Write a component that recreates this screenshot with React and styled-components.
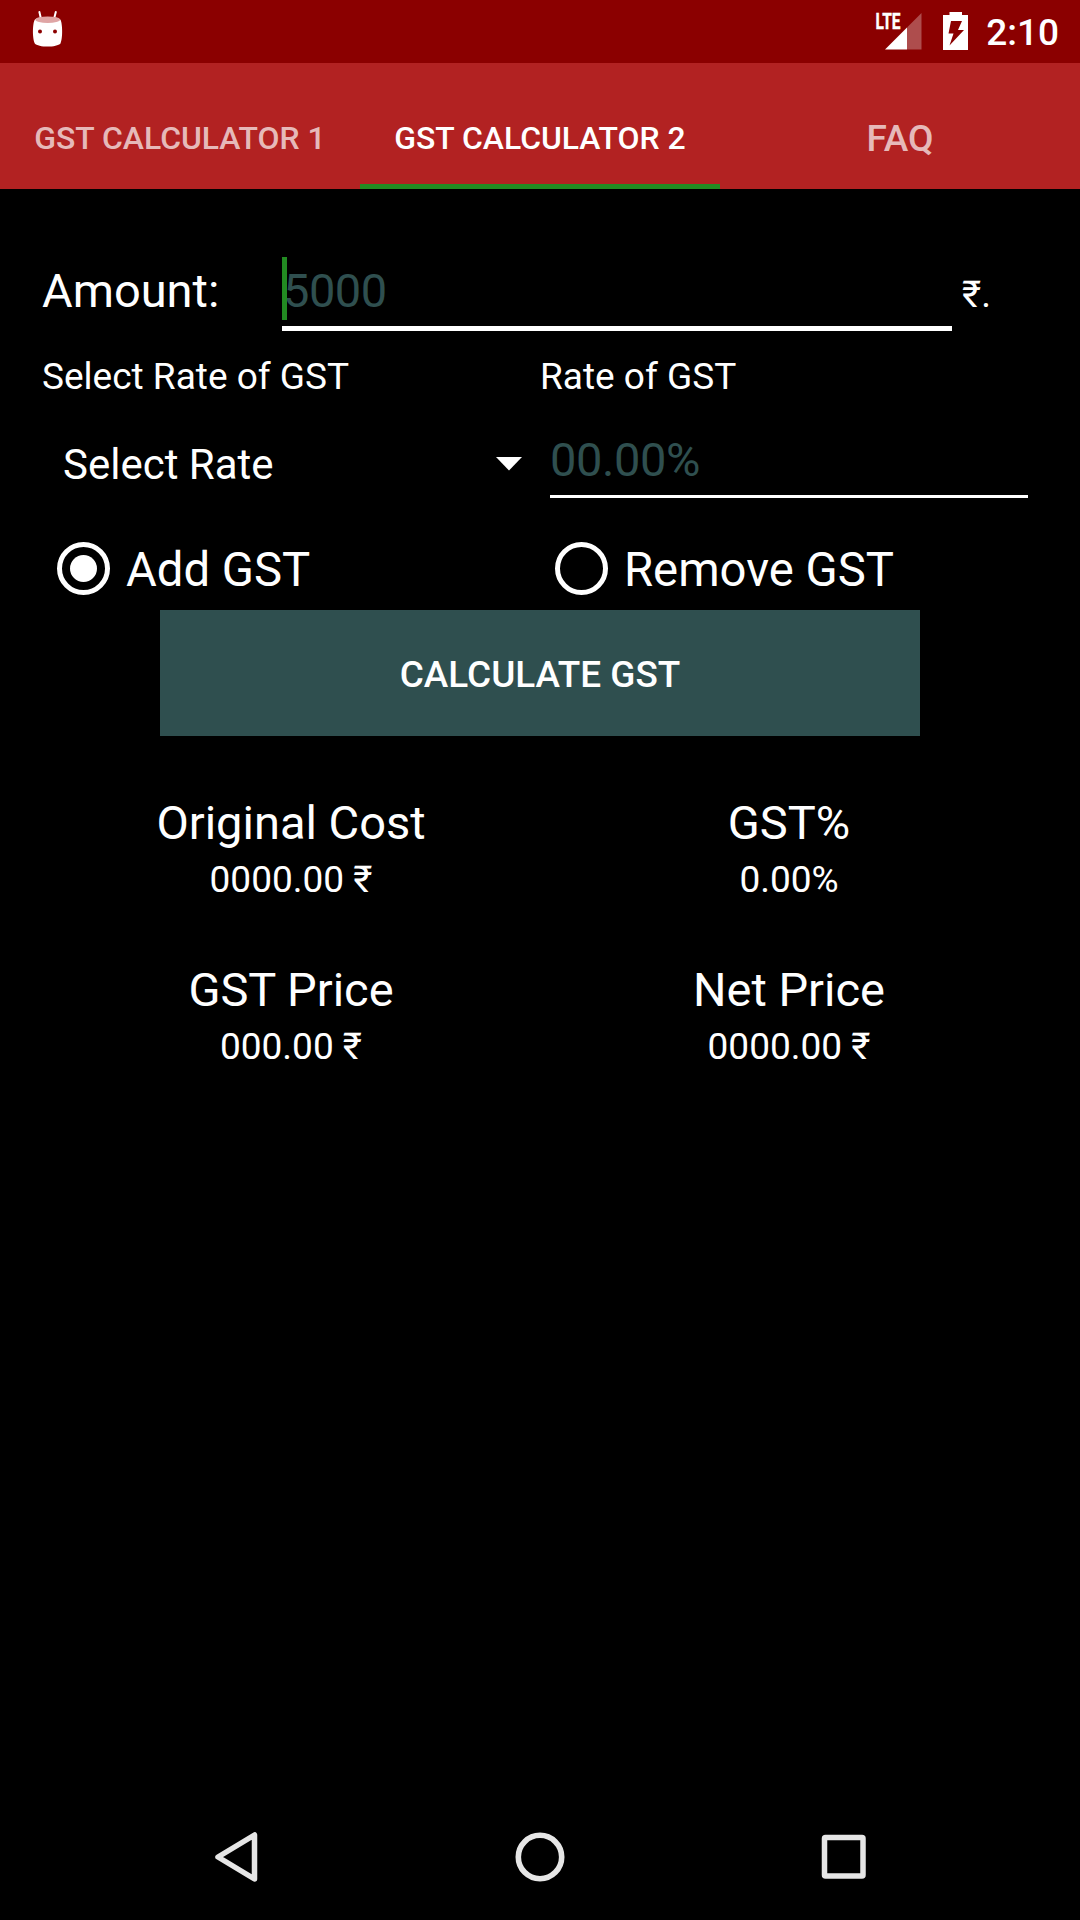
import React, { useState } from "react";
import styled, { createGlobalStyle } from "styled-components";

const TABS = [
  { name: "GST CALCULATOR 1" },
  { name: "GST CALCULATOR 2" },
  { name: "FAQ", large: true },
];

const RESULTS = [
  { title: "Original Cost", value: "0000.00 ₹" },
  { title: "GST%", value: "0.00%" },
  { title: "GST Price", value: "000.00 ₹" },
  { title: "Net Price", value: "0000.00 ₹" },
];

const RobotIcon = () => (
  <svg width="34" height="40" viewBox="31 9 34 40">
    <path
      d="M39.4 12L41 19M55.8 12L54 19"
      stroke="#fff"
      strokeWidth="2"
      strokeLinecap="round"
    />
    <path
      d="M35 19.5C39 16 56.5 16 60.3 19.5C62 21 63.5 36 60.5 43.5C57 47.6 38 47.6 34.8 43.5C31.8 36 33 21 35 19.5Z"
      fill="#fff"
    />
    <ellipse cx="47.7" cy="19.7" rx="12.3" ry="3.3" fill="#dfa5a5" />
    <circle cx="40" cy="31.5" r="2" fill="#8b0000" />
    <circle cx="55" cy="31.5" r="2" fill="#8b0000" />
  </svg>
);

const SignalIcon = () => (
  <svg width="48" height="48" viewBox="874 3 48 48">
    <path d="M921.5 13V49.5H907V27.5Z" fill="#fff" fillOpacity="0.3" />
    <path d="M907 27.5V49.5H885Z" fill="#fff" />
    <text
      x="875.5"
      y="29"
      textLength="25"
      lengthAdjust="spacingAndGlyphs"
      fontSize="21.5"
      fontWeight="700"
      fill="#fff"
      stroke="#fff"
      strokeWidth="0.4"
    >
      LTE
    </text>
  </svg>
);

const BatteryIcon = () => (
  <svg width="25" height="47" viewBox="943 3 25 47">
    <path d="M949.5 12H962V15H968V50H943V15H949.5Z" fill="#fff" />
    <path
      d="M951 21H962L958 30H964L949.5 45.5L953.5 33.5H948.5Z"
      fill="#8b0000"
    />
  </svg>
);

const App = () => {
  const [tab, setTab] = useState("GST CALCULATOR 2");
  const [mode, setMode] = useState("add");

  return (
    <>
      <GlobalStyle />
      <StScreen>
        <StStatusBar>
          <StNotifications>
            <RobotIcon />
          </StNotifications>
          <StStatusIcons>
            <SignalIcon />
            <BatteryIcon />
            <StClock>2:10</StClock>
          </StStatusIcons>
        </StStatusBar>

        <StTabBar>
          {TABS.map(({ name, large }) => (
            <StTab
              key={name}
              $active={tab === name}
              $large={large}
              onClick={() => setTab(name)}
            >
              {name}
            </StTab>
          ))}
        </StTabBar>

        <StForm>
          <StAmountRow>
            <StAmountLabel>Amount:</StAmountLabel>
            <StAmountField>
              <StAmountInput placeholder="5000" />
              <StCursor />
            </StAmountField>
            <StUnit>₹.</StUnit>
          </StAmountRow>

          <StTwoCols>
            <StLabel>Select Rate of GST</StLabel>
            <StLabel>Rate of GST</StLabel>
          </StTwoCols>

          <StTwoCols>
            <StSpinner>
              Select Rate
              <svg width="26" height="14" viewBox="0 0 26 14">
                <path d="M0 0H26L13 13.5Z" fill="#fff" />
              </svg>
            </StSpinner>
            <StRateInput placeholder="00.00%" />
          </StTwoCols>

          <StTwoCols>
            <StRadio onClick={() => setMode("add")}>
              <StDot $checked={mode === "add"} />
              <StRadioText>Add GST</StRadioText>
            </StRadio>
            <StRadio onClick={() => setMode("remove")}>
              <StDot $checked={mode === "remove"} />
              <StRadioText>Remove GST</StRadioText>
            </StRadio>
          </StTwoCols>

          <StCalcBtn>CALCULATE GST</StCalcBtn>

          <StResults>
            {RESULTS.map(({ title, value }) => (
              <StResult key={title}>
                <StResultTitle>{title}</StResultTitle>
                <StResultValue>{value}</StResultValue>
              </StResult>
            ))}
          </StResults>
        </StForm>

        <StNavBar>
          <svg width="52" height="56" viewBox="210 1829 52 56">
            <path
              d="M254.5 1835V1879L218 1857Z"
              fill="none"
              stroke="#e6e6e6"
              strokeWidth="5.5"
              strokeLinejoin="round"
            />
          </svg>
          <svg width="52" height="56" viewBox="514 1829 52 56">
            <circle
              cx="540"
              cy="1857"
              r="21.7"
              fill="none"
              stroke="#e6e6e6"
              strokeWidth="5.6"
            />
          </svg>
          <svg width="52" height="56" viewBox="818 1829 52 56">
            <rect
              x="824.5"
              y="1837.5"
              width="38.5"
              height="38.5"
              rx="1"
              fill="none"
              stroke="#e6e6e6"
              strokeWidth="5.5"
            />
          </svg>
        </StNavBar>
      </StScreen>
    </>
  );
};

export default App;

const GlobalStyle = createGlobalStyle`
  * {
    box-sizing: border-box;
  }

  body {
    margin: 0;
    background: #000;
    color: #fff;
    font-family: Roboto, sans-serif;
  }

  button, input {
    margin: 0;
    padding: 0;
    border: none;
    border-radius: 0;
    outline: none;
    background: none;
    color: inherit;
    font-family: inherit;
  }

  svg {
    display: block;
    flex-shrink: 0;
  }
`;

const StScreen = styled.div`
  display: flex;
  flex-flow: column;
  width: 1080px;
  height: 1920px;
  overflow: hidden;
`;

const StStatusBar = styled.header`
  display: flex;
  justify-content: space-between;
  height: 63px;
  padding: 3px 21px 0 31px;
  background: #8b0000;
`;

const StNotifications = styled.div`
  padding-top: 6px;
`;

const StStatusIcons = styled.div`
  display: flex;
  align-items: flex-start;
  gap: 21px;
`;

const StClock = styled.span`
  margin-left: -3px;
  padding-top: 8px;
  font-size: 37px;
  font-weight: 500;
  line-height: 44px;
`;

const StTabBar = styled.nav`
  display: grid;
  grid-template-columns: repeat(3, 1fr);
  height: 126px;
  background: #b22222;
`;

const StTab = styled.button`
  padding-top: ${({ $active, $large }) =>
    $active ? "28px" : $large ? "25px" : "23px"};
  border-bottom: ${({ $active }) => ($active ? "5px solid #228b22" : "none")};
  color: ${({ $active }) => ($active ? "#fff" : "rgba(255, 255, 255, 0.7)")};
  font-size: ${({ $large }) => ($large ? "37px" : "31.9px")};
  font-weight: 500;
`;

const StForm = styled.main`
  display: flex;
  flex-flow: column;
  flex: 1;
  padding: 60px 42px 0;
`;

const StAmountRow = styled.div`
  display: flex;
  height: 82px;
`;

const StAmountLabel = styled.label`
  width: 240px;
  padding-top: 14px;
  font-size: 47px;
  line-height: 56px;
`;

const StAmountField = styled.div`
  position: relative;
  width: 670px;
`;

const StAmountInput = styled.input`
  width: 100%;
  height: 100%;
  padding: 5px 0 0 1px;
  border-bottom: 5px solid #fff;
  font-size: 47px;
  letter-spacing: -0.5px;

  &::placeholder {
    color: #2f4f4f;
    opacity: 1;
  }
`;

const StCursor = styled.span`
  position: absolute;
  top: 8px;
  left: 0;
  width: 5px;
  height: 63px;
  background: #228b22;
`;

const StUnit = styled.span`
  padding: 24px 0 0 10px;
  font-size: 37px;
  line-height: 44px;
`;

const StTwoCols = styled.div`
  display: grid;
  grid-template-columns: 1fr 1fr;
`;

const StLabel = styled.label`
  padding-top: 24px;
  margin-bottom: -1px;
  font-size: 37px;
  line-height: 44px;
`;

const StSpinner = styled.button`
  display: flex;
  justify-content: space-between;
  align-items: center;
  height: 100px;
  padding: 32px 18.5px 0 21px;
  font-size: 42px;
`;

const StRateInput = styled.input`
  width: 478px;
  height: 100px;
  margin-left: 10px;
  padding-top: 25px;
  border-bottom: 3px solid #fff;
  font-size: 47px;
  letter-spacing: -0.4px;

  &::placeholder {
    color: #2f4f4f;
    opacity: 1;
  }
`;

const StRadio = styled.div`
  display: flex;
  align-items: center;
  gap: 16px;
  height: 112px;
  padding: 28px 0 0 15px;
`;

const StDot = styled.span`
  display: flex;
  width: 53px;
  height: 53px;
  border: 5.5px solid #fff;
  border-radius: 50%;

  &::after {
    content: "";
    width: 27px;
    height: 27px;
    margin: auto;
    border-radius: 50%;
    background: ${({ $checked }) => ($checked ? "#fff" : "transparent")};
  }
`;

const StRadioText = styled.span`
  padding-top: 4px;
  font-size: 47.25px;
  line-height: 56px;
`;

const StCalcBtn = styled.button`
  align-self: center;
  width: 760px;
  height: 126px;
  padding-top: 2px;
  background: #2f4f4f;
  font-size: 36.9px;
  font-weight: 500;
`;

const StResults = styled.section`
  display: grid;
  grid-template-columns: 1fr 1fr;
  row-gap: 60px;
  margin-top: 59px;
`;

const StResult = styled.div`
  display: flex;
  flex-flow: column;
  align-items: center;
  gap: 7px;
`;

const StResultTitle = styled.span`
  font-size: 47px;
  line-height: 56px;
`;

const StResultValue = styled.span`
  font-size: 37px;
  line-height: 44px;
`;

const StNavBar = styled.footer`
  display: flex;
  justify-content: center;
  align-items: center;
  gap: 252px;
  height: 126px;
`;
